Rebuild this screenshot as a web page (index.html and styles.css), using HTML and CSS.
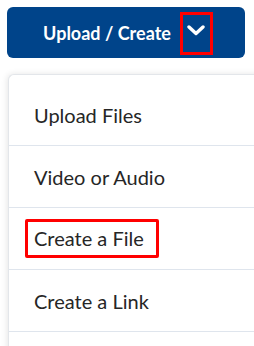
FILE: index.html
```html
<!DOCTYPE html>
<html lang="en">
<head>
    <meta charset="UTF-8">
    <meta name="viewport" content="width=device-width, initial-scale=1.0">
    <title>Upload / Create</title>
    <link rel="stylesheet" href="styles.css">
</head>
<body>

<div class="page">
    <div class="upload-btn">
        <span class="upload-label">Upload / Create</span>
        <span class="caret-box">
            <svg class="caret" width="18" height="11" viewBox="0 0 18 11">
                <path d="M2 2 L9 8.5 L16 2" fill="none" stroke="#fff" stroke-width="3.4" stroke-linecap="round" stroke-linejoin="round"/>
            </svg>
        </span>
    </div>

    <div class="menu">
        <div class="menu-item">Upload Files</div>
        <div class="menu-item">Video or Audio</div>
        <div class="menu-item"><span class="marked">Create a File</span></div>
        <div class="menu-item">Create a Link</div>
    </div>
</div>

</body>
</html>
```

FILE: styles.css
```css
body {
    font-family: Lato, "Open Sans", sans-serif;
    margin: 0;
    padding: 0;
    background-color: #fff;
}

.page {
    width: 254px;
    height: 346px;
    overflow: hidden;
}

.upload-btn {
    width: 238px;
    height: 51px;
    margin: 7px 0 0 7px;
    padding-left: 4px;
    box-sizing: border-box;
    background-color: #00448a;
    border-radius: 6px;
    display: flex;
    align-items: center;
    justify-content: center;
    gap: 9px;
    color: #fff;
}

.upload-label {
    font-size: 18px;
    font-weight: bold;
}

.caret-box {
    width: 27px;
    height: 37px;
    border: 3px solid #ff0000;
    display: flex;
    align-items: center;
    justify-content: center;
    margin-top: 2px;
}

.caret {
    margin-top: -7px;
}

.menu {
    width: 300px;
    margin: 16px 0 0 8px;
    padding: 9px 0 40px;
    background: #fff;
    border: 1px solid #e3e6ea;
    border-right: none;
    border-radius: 6px 0 0 6px;
    box-shadow: -1px 0 6px rgba(0,0,0,0.1);
}

.menu-item {
    height: 61px;
    display: flex;
    align-items: center;
    padding-left: 25px;
    border-bottom: 1px solid #dfe5ed;
    font-size: 20px;
    color: #262626;
}

.marked {
    border: 3px solid #ff0000;
    border-radius: 2px;
    padding: 0 12px 0 6px;
    margin-left: -9px;
    line-height: 33px;
}
```
